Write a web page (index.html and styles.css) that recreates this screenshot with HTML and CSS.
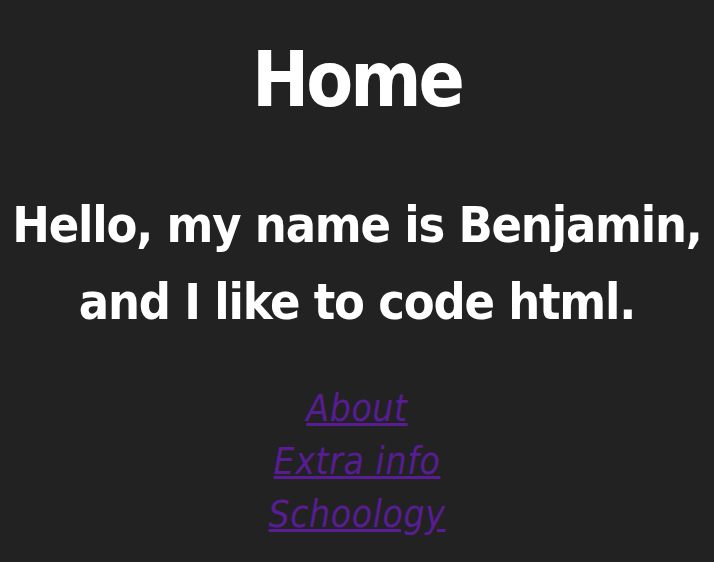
FILE: index.html
```html
<!DOCTYPE html>
<html>
<head>
<meta charset="utf-8">
<link rel="stylesheet" href="styles.css">
<title>Home</title>
</head>
<body>
<h1 class="title">Home</h1>
<p class="intro">Hello, my name is Benjamin,<br>and I like to code html.</p>
<nav class="links">
<a href="#about">About</a>
<a href="#extra">Extra info</a>
<a href="#schoology">Schoology</a>
</nav>
</body>
</html>
```
FILE: styles.css
```css
html, body {
  margin: 0;
  background: #222222;
}
body {
  font-family: "DejaVu Sans Condensed", "DejaVu Sans", sans-serif;
  color: #ffffff;
  text-align: center;
  padding: 0;
}
.title {
  font-size: 76px;
  font-weight: bold;
  line-height: 89px;
  letter-spacing: -3px;
  margin: 35px 0 0;
}
.intro {
  font-size: 50px;
  font-weight: bold;
  line-height: 77px;
  letter-spacing: -1.2px;
  margin: 63px 0 0;
  white-space: nowrap;
}
.links {
  display: flex;
  flex-direction: column;
  align-items: center;
  margin-top: 41px;
}
.links a {
  color: #581c94;
  font-style: italic;
  font-size: 37px;
  line-height: 53px;
  letter-spacing: 0.6px;
}
```
